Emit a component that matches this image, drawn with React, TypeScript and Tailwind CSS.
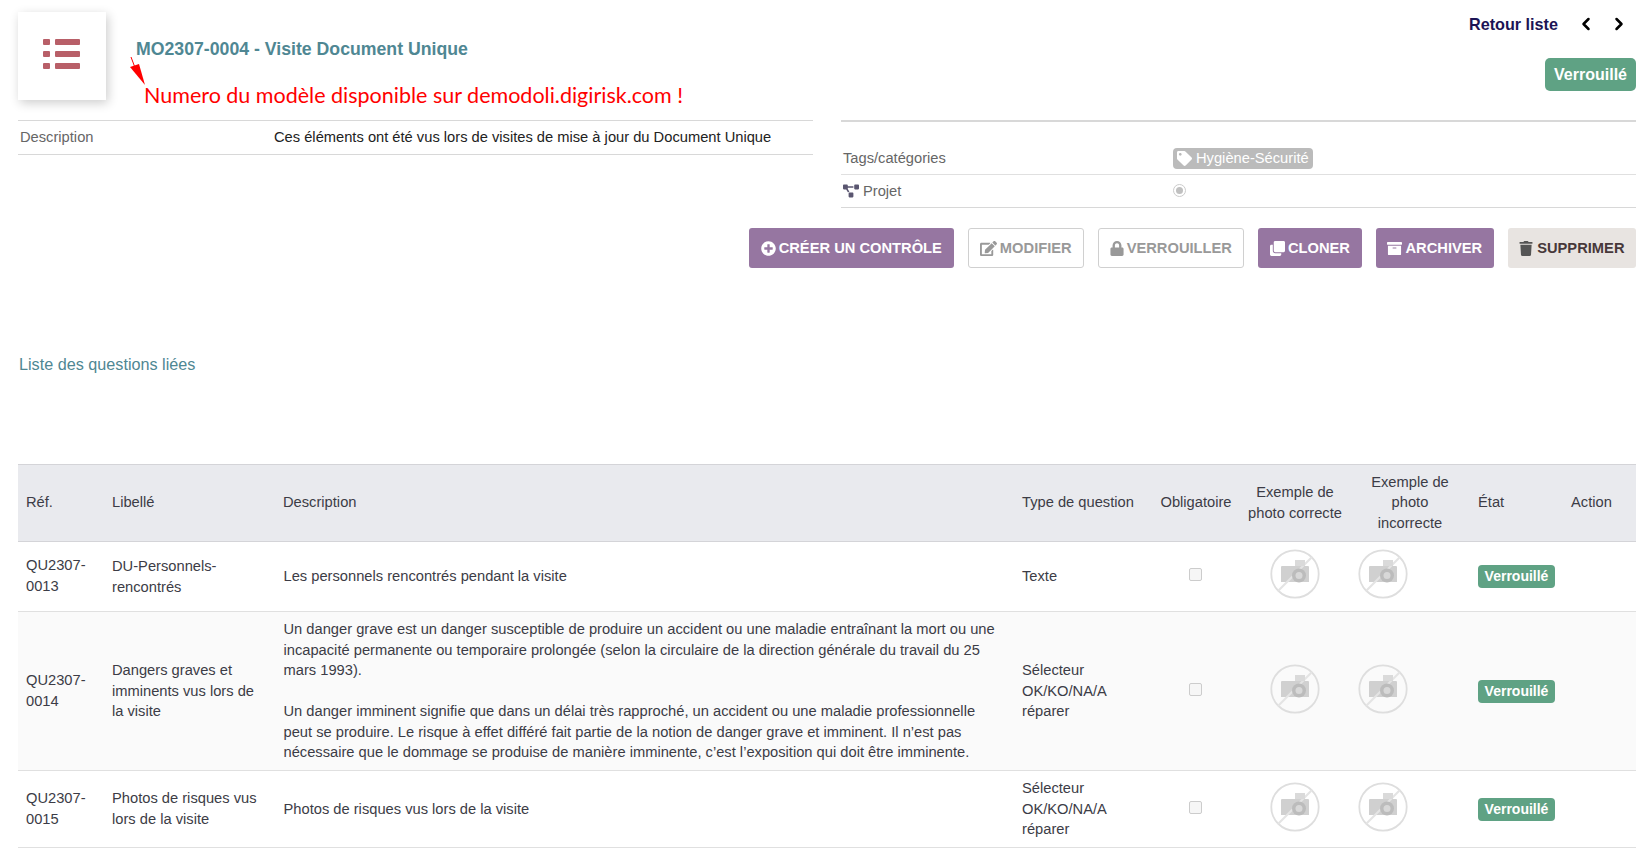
import { ChevronLeft, ChevronRight } from 'lucide-react'
import { FaArchive, FaClone, FaEdit, FaLock, FaPlusCircle, FaProjectDiagram, FaTag, FaTrash } from 'react-icons/fa'

const rows = [
  {
    ref: ['QU2307-', '0013'],
    label: 'DU-Personnels-rencontrés',
    description: ['Les personnels rencontrés pendant la visite'],
    type: 'Texte',
    height: 'h-[70px]',
    bg: 'bg-white'
  },
  {
    ref: ['QU2307-', '0014'],
    label: 'Dangers graves et imminents vus lors de la visite',
    description: [
      'Un danger grave est un danger susceptible de produire un accident ou une maladie entraînant la mort ou une incapacité permanente ou temporaire prolongée (selon la circulaire de la direction générale du travail du 25 mars 1993).',
      'Un danger imminent signifie que dans un délai très rapproché, un accident ou une maladie professionnelle peut se produire. Le risque à effet différé fait partie de la notion de danger grave et imminent. Il n’est pas nécessaire que le dommage se produise de manière imminente, c’est l’exposition qui doit être imminente.'
    ],
    type: 'Sélecteur OK/KO/NA/A réparer',
    height: 'h-[159px]',
    bg: 'bg-[#fafafa]'
  },
  {
    ref: ['QU2307-', '0015'],
    label: 'Photos de risques vus lors de la visite',
    description: ['Photos de risques vus lors de la visite'],
    type: 'Sélecteur OK/KO/NA/A réparer',
    height: 'h-[77px]',
    bg: 'bg-white'
  }
]

function NoPhoto() {
  return (
    <svg width="50" height="50" viewBox="0 0 50 50" className="block blur-[0.4px]">
      <circle cx="25" cy="25" r="23.7" fill="none" stroke="#dedede" strokeWidth="1.8" />
      <path d="M11 18q0-1 1-1h26q1 0 1 1v15H11z" fill="#d0d0d0" />
      <path d="M8 42 42 8" stroke="#e4e4e4" strokeWidth="2.2" />
      <path d="M25 17v-6h10v6z" fill="#dadada" />
      <circle cx="29" cy="26.5" r="7" fill="#bcbcbc" />
      <circle cx="29" cy="26.5" r="3.5" fill="#d8d8d8" />
    </svg>
  )
}

function Badge() {
  return (
    <span className="inline-block h-[23px] w-[77px] rounded-[4px] bg-[#5fa284] text-center text-[14px] font-bold leading-[23px] text-white">
      Verrouillé
    </span>
  )
}

export default function App() {
  return (
    <div className="relative h-[857px] w-[1642px] overflow-hidden bg-white pl-[18px] pr-[6px] font-['Liberation_Sans',Arial,sans-serif] text-[14.7px] leading-[20.6px] text-[#3c3c46]">
      <header className="flex h-[120px] justify-between">
        <div className="flex">
          <div className="mt-3 flex h-[88px] w-[88px] flex-col justify-center gap-[6px] bg-white pb-[5px] pl-[25px] shadow-[2px_3px_10px_rgba(0,0,0,0.2)]">
            {[0, 1, 2].map((i) => (
              <div key={i} className="flex gap-[5px]">
                <span className="h-[6px] w-[7px] rounded-[1px] bg-[#b85f68]" />
                <span className="h-[6px] w-[25px] rounded-[1px] bg-[#b85f68]" />
              </div>
            ))}
          </div>
          <h1 className="ml-[30px] mt-[38px] text-[17.7px] font-bold leading-[22px] text-[#4f8793]">
            MO2307-0004 - Visite Document Unique
          </h1>
        </div>
        <div className="flex flex-col items-end">
          <div className="mr-[7px] mt-[14px] flex items-center text-[16.2px] font-bold leading-[20px] text-[#1c1455]">
            Retour liste
            <ChevronLeft className="ml-[18px] h-[20px] w-[20px] text-black" strokeWidth={3} />
            <ChevronRight className="ml-[13px] h-[20px] w-[20px] text-black" strokeWidth={3} />
          </div>
          <span className="mt-[24px] rounded-[5px] bg-[#5fa284] px-[9px] text-[16px] font-bold leading-[33px] text-white">
            Verrouillé
          </span>
        </div>
      </header>

      <svg width="20" height="32" viewBox="0 0 20 32" className="absolute left-[129px] top-[55px]">
        <path d="M2 2 8 18" stroke="#ff0000" strokeWidth="1" />
        <path d="M1 12 10 9 16 30z" fill="#ff0000" />
      </svg>
      <div className="absolute left-[144px] top-[81px] font-['Lato',sans-serif] text-[21.5px] leading-[28px] text-[#ff0000]">
        Numero du modèle disponible sur demodoli.digirisk.com !
      </div>

      <section className="flex justify-between">
        <div className="h-[35px] w-[795px] border-y border-[#d8d8d8]">
          <div className="flex pt-[6px]">
            <span className="w-[256px] pl-[2px] text-[#666]">Description</span>
            <span className="text-[#222]">Ces éléments ont été vus lors de visites de mise à jour du Document Unique</span>
          </div>
        </div>
        <div className="w-[795px] border-t-2 border-[#d8d8d8]">
          <div className="flex h-[53px] items-end border-b border-[#e0e0e0] pb-[5px]">
            <span className="w-[332px] pl-[2px] text-[#666]">Tags/catégories</span>
            <span className="flex h-[21px] items-center gap-[4px] rounded-[4px] bg-[#bbbbbb] px-[4px] text-white">
              <FaTag className="h-[15px] w-[15px]" />
              Hygiène-Sécurité
            </span>
          </div>
          <div className="flex h-[33px] items-center border-b border-[#d8d8d8]">
            <span className="flex w-[332px] items-center gap-[4px] pl-[2px] text-[#666]">
              <FaProjectDiagram className="h-[14px] w-[16px] text-[#5a5670]" />
              Projet
            </span>
            <span className="mb-[2px] flex h-[13px] w-[13px] items-center justify-center rounded-full border border-[#cccccc]">
              <span className="h-[7px] w-[7px] rounded-full bg-[#c0c0c0]" />
            </span>
          </div>
        </div>
      </section>

      <div className="mt-[20px] flex justify-end gap-[14px] font-bold leading-[40px]">
        <button className="flex h-[40px] items-center gap-[3px] rounded-[3px] bg-[#9676a1] px-[12px] text-white">
          <FaPlusCircle className="h-[15px] w-[15px]" /> CRÉER UN CONTRÔLE
        </button>
        <button className="flex h-[40px] items-center gap-[3px] rounded-[3px] border border-[#d0d0d0] bg-white px-[11px] text-[#999]">
          <FaEdit className="h-[17px] w-[17px]" /> MODIFIER
        </button>
        <button className="flex h-[40px] items-center gap-[3px] rounded-[3px] border border-[#d0d0d0] bg-white px-[11px] text-[#999]">
          <FaLock className="h-[15px] w-[14px]" /> VERROUILLER
        </button>
        <button className="flex h-[40px] items-center gap-[3px] rounded-[3px] bg-[#9676a1] px-[12px] text-white">
          <FaClone className="h-[15px] w-[15px]" /> CLONER
        </button>
        <button className="flex h-[40px] items-center gap-[3px] rounded-[3px] bg-[#9676a1] px-[11.5px] text-white">
          <FaArchive className="h-[15px] w-[15px]" /> ARCHIVER
        </button>
        <button className="flex h-[40px] items-center gap-[4px] rounded-[3px] bg-[#e8e4e1] px-[11.5px] text-[#47383a]">
          <FaTrash className="h-[15px] w-[14px] text-[#555]" /> SUPPRIMER
        </button>
      </div>

      <div className="ml-px mt-[85px] text-[16.2px] leading-[22px] text-[#4f8793]">Liste des questions liées</div>

      <table className="mt-[89px] w-[1618px] table-fixed border-collapse">
        <colgroup>
          <col className="w-[86px]" />
          <col className="w-[171px]" />
          <col className="w-[739px]" />
          <col className="w-[138px]" />
          <col className="w-[88px]" />
          <col className="w-[112px]" />
          <col className="w-[126px]" />
          <col className="w-[69px]" />
          <col className="w-[89px]" />
        </colgroup>
        <thead>
          <tr className="h-[77px] border-y border-[#d4d4d8] bg-[#e9eaee] text-left">
            <th className="px-2 pb-[1px] font-normal">Réf.</th>
            <th className="px-2 pb-[1px] font-normal">Libellé</th>
            <th className="px-2 pb-[1px] font-normal">Description</th>
            <th className="px-2 pb-[1px] font-normal">Type de question</th>
            <th className="pb-[1px] text-center font-normal">Obligatoire</th>
            <th className="pb-[1px] pr-[2px] text-center font-normal">Exemple de photo correcte</th>
            <th className="pb-[1px] pl-[12px] pr-[22px] text-center font-normal">Exemple de photo incorrecte</th>
            <th className="pb-[1px] font-normal">État</th>
            <th className="pb-[1px] text-center font-normal">Action</th>
          </tr>
        </thead>
        <tbody>
          {rows.map((row, index) => (
            <tr key={index} className={`${row.height} ${row.bg} border-b border-[#e0e0e0]`}>
              <td className="px-2 pb-[1px]">{row.ref[0]}<br />{row.ref[1]}</td>
              <td className="px-2">{row.label}</td>
              <td className="py-0 pl-[8.5px] pr-4">
                {row.description.map((text, i) => (
                  <p key={i} className={i > 0 ? 'mt-[20.6px]' : ''}>{text}</p>
                ))}
              </td>
              <td className="px-2">{row.type}</td>
              <td className="pb-[5px] pr-[1px] text-center">
                <input type="checkbox" disabled className="h-[13px] w-[13px] appearance-none rounded-[2px] border border-[#ccc] bg-[#f6f6f6] align-middle" />
              </td>
              <td className="pb-[5px]"><div className="flex justify-center pr-[2px]"><NoPhoto /></div></td>
              <td className="pb-[5px]"><div className="pl-[6px]"><NoPhoto /></div></td>
              <td><Badge /></td>
              <td />
            </tr>
          ))}
        </tbody>
      </table>
    </div>
  )
}
